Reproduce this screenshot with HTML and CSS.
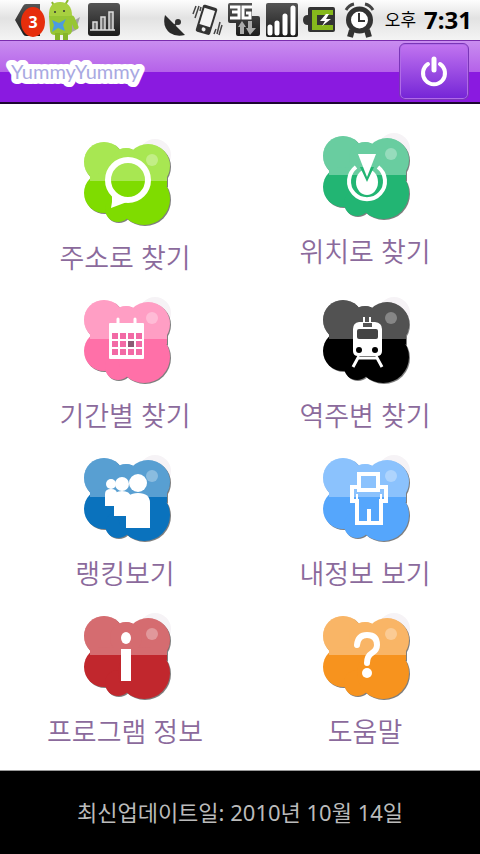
FILE: index.html
```html
<!DOCTYPE html>
<html lang="ko">
  <head>
    <meta charset="UTF-8" />
    <meta name="viewport" content="width=device-width, initial-scale=1.0" />
    <title>YummyYummy</title>
    <link rel="stylesheet" href="styles.css">
  </head>
  <body>
    <!-- shared shapes -->
    <svg class="defs" width="0" height="0" aria-hidden="true">
      <defs>
        <linearGradient id="dark" x1="0" y1="0" x2="0" y2="1">
          <stop offset="0" stop-color="#555" />
          <stop offset="1" stop-color="#1c1c1c" />
        </linearGradient>
        <g id="blob">
          <circle cx="21" cy="22" r="20" />
          <circle cx="65" cy="26" r="22" />
          <circle cx="43" cy="24" r="16" />
          <circle cx="21" cy="53" r="20" />
          <circle cx="35" cy="69" r="13" />
          <circle cx="61" cy="59" r="26" />
          <path d="M7 34H84V46H7z" />
        </g>
        <clipPath id="blobClip">
          <circle cx="21" cy="22" r="20" />
          <circle cx="65" cy="26" r="22" />
          <circle cx="43" cy="24" r="16" />
          <path d="M7 34H84V46H7z" />
        </clipPath>
        <g id="cloud">
          <circle cx="72" cy="15" r="16" fill="#f6f3f6" />
          <use href="#blob" x="1" y="1" fill="#000" opacity="0.5" />
          <use href="#blob" />
          <g clip-path="url(#blobClip)">
            <path d="M0 0H90V41H0z" fill="#fff" opacity="0.32" />
          </g>
          <circle cx="69" cy="20" r="6" fill="#fff" opacity="0.3" />
        </g>
      </defs>
    </svg>

    <div class="status">
      <div class="status-left">
        <svg width="32" height="40" viewBox="0 0 32 40">
          <path d="M1 20L9 6Q10 4 12 4H26V36H12Q10 36 9 34z" fill="url(#dark)" />
          <ellipse cx="19" cy="22" rx="12" ry="15" fill="#e62e0c" />
          <text x="19" y="28" class="badge">3</text>
        </svg>
        <svg width="36" height="40" viewBox="0 0 36 40">
          <path d="M26 22L34 17 30 30 22 34z" fill="#777" opacity="0.6" />
          <path d="M6 2L8 6M22 0L19 5" stroke="#8ab92d" stroke-width="2" />
          <path d="M3 17Q2 2 14 2T26 16z" fill="#a8d040" />
          <path d="M3 16H26V30Q26 35 21 35H9Q4 35 4 30z" fill="#97c634" />
          <path d="M9 33H14V40H9zM17 33H22V40H17z" fill="#86b52a" />
          <path d="M26 18L30 27" stroke="#97c634" stroke-width="5" stroke-linecap="round" />
          <circle cx="9" cy="12" r="1" fill="#333" /><circle cx="18" cy="11" r="1" fill="#333" />
          <path d="M6 20L13 23 20 19 17 25 19 31 12 28 6 32 8 25z" fill="#4b9be0" />
        </svg>
        <svg width="40" height="40" viewBox="0 0 40 40">
          <rect x="6" y="3" width="32" height="33" rx="3" fill="url(#dark)" />
          <path d="M8 30H33M11 30V22H15V30M19 30V17H23V30M27 30V12H31V30" fill="#777" stroke="#ddd" stroke-width="1.5" />
        </svg>
      </div>
      <div class="status-right">
        <svg width="24" height="40" viewBox="0 0 24 40">
          <path d="M2 15Q-1 27 7 33Q13 37 22 35z" fill="#2a2a2a" />
          <path d="M11 26L15 22" stroke="#333" stroke-width="2" />
          <circle cx="15" cy="22" r="3" fill="#333" />
        </svg>
        <svg width="32" height="40" viewBox="0 0 32 40">
          <g transform="rotate(17 16 20)">
            <rect x="8" y="6" width="15" height="28" rx="2" fill="#333" />
            <rect x="10" y="9" width="11" height="17" fill="#f4f4f4" />
            <circle cx="15.500" cy="30" r="2" fill="#eee" />
          </g>
          <path d="M5 6L2 14M8 6L4 18M10 7L9 11M29 22L26 34M31 25L28 35M25 29L23 34" stroke="#444" stroke-width="1.500" />
        </svg>
        <svg width="34" height="40" viewBox="0 0 34 40">
          <path d="M3 3H25V16H31Q33 16 33 18V34Q33 36 31 36H11Q9 36 9 34V23H3Q1 23 1 21V5Q1 3 3 3z" fill="url(#dark)" />
          <path d="M3 7H12V18H3M5 12H12" fill="none" stroke="#fff" stroke-width="3" />
          <path d="M25 7H16V18H23V13H19" fill="none" stroke="#fff" stroke-width="3" />
          <path d="M11 27L15 21 19 27H17V34H13V27zM21 21H25V28H29L23 35 19 28H21z" fill="#aaa" />
        </svg>
        <svg width="34" height="40" viewBox="0 0 34 40">
          <rect x="1" y="3" width="32" height="34" rx="2" fill="url(#dark)" />
          <path d="M5 33V27M12 33V23M20 33V16M28 33V8" stroke="#fff" stroke-width="5" stroke-linecap="round" />
        </svg>
        <svg width="34" height="40" viewBox="0 0 34 40">
          <path d="M7 7H30Q32 7 32 9V30Q32 32 30 32H7Q5 32 5 30V25Q0 25 0 20T5 15V9Q5 7 7 7z" fill="#333" />
          <path d="M9 10H30V15H14V25H30V30H9z" fill="#86b81c" />
          <path d="M23 14L17 21H22L19 26 28 19H23L26 14z" fill="#fff" />
        </svg>
        <svg width="36" height="40" viewBox="0 0 36 40">
          <path d="M5 10Q8 5 13 4M24 4Q29 5 32 10" fill="none" stroke="#444" stroke-width="3" />
          <path d="M11 30L9 37M26 30L28 37" stroke="#333" stroke-width="6" />
          <circle cx="18.500" cy="20" r="11" fill="#fff" stroke="#333" stroke-width="5" />
          <path d="M18 13V21H24" fill="none" stroke="#333" stroke-width="2" />
        </svg>
        <span class="ampm">오후</span>
        <span class="clock">7:31</span>
      </div>
    </div>

    <header class="header">
      <h1 class="logo">
        <svg width="150" height="56" viewBox="0 0 150 56">
          <text x="6" y="35" class="logo-text">YummyYummy</text>
        </svg>
      </h1>
      <button class="power" type="button" aria-label="종료">
        <svg width="32" height="34" viewBox="0 0 32 34">
          <path d="M10 9A11 11 0 1 0 22 9" fill="none" stroke="#fff" stroke-width="4" stroke-linecap="round" />
          <path d="M16 4V15" stroke="#fff" stroke-width="5" stroke-linecap="round" />
        </svg>
      </button>
    </header>

    <main class="menu">
      <a class="item low" href="#address">
        <svg class="icon green" viewBox="-3 0 90 90">
          <use href="#cloud" />
          <circle cx="45" cy="40" r="20" fill="none" stroke="#fff" stroke-width="6" />
          <path d="M26 48Q31 54 28 68L44 62z" fill="#fff" />
        </svg>
        <span class="label">주소로 찾기</span>
      </a>
      <a class="item" href="#location">
        <svg class="icon teal" viewBox="-2 0 90 90">
          <use href="#cloud" />
          <path d="M34 33A18 18 0 1 0 56 33" fill="none" stroke="#fff" stroke-width="4" />
          <ellipse cx="45" cy="48" rx="11" ry="13" fill="#fff" />
          <path d="M38 33H52L45 48z" />
          <path d="M36 20H54L45 43z" fill="#fff" />
        </svg>
        <span class="label">위치로 찾기</span>
      </a>
      <a class="item" href="#period">
        <svg class="icon pink" viewBox="-3 0 90 90">
          <use href="#cloud" />
          <rect x="26" y="25" width="35" height="36" rx="1" fill="#fff" />
          <path d="M35 21V27M52 21V27" stroke="#fff" stroke-width="3" stroke-linecap="round" />
          <path d="M29 38H59M29 46H59M29 54H59" stroke="#f26aa5" stroke-width="6" stroke-dasharray="6 2" />
          <path d="M45 43H51V49H45z" fill="#8c5a73" />
        </svg>
        <span class="label">기간별 찾기</span>
      </a>
      <a class="item" href="#station">
        <svg class="icon black" viewBox="-2 0 90 90">
          <use href="#cloud" />
          <path d="M42 19V25M48 19V25" stroke="#fff" stroke-width="2" />
          <path d="M37 24H53Q60 25 60 31V53Q60 58 55 58H36Q31 58 31 53V31Q31 25 37 24z" fill="#fff" />
          <path d="M41 25H50V29H41z" fill="#555" />
          <path d="M37 31H54Q56 31 56 33V39Q56 41 54 41H37Q35 41 35 39V33Q35 31 37 31z" fill="#444" />
          <circle cx="37" cy="52" r="3" /><circle cx="53" cy="52" r="3" />
          <path d="M37 58L31 69M54 58L60 69M36 60H55" stroke="#fff" stroke-width="3" />
        </svg>
        <span class="label">역주변 찾기</span>
      </a>
      <a class="item" href="#ranking">
        <svg class="icon blue" viewBox="-3 0 90 90">
          <use href="#cloud" />
          <g fill="#fff">
            <circle cx="28" cy="28" r="5" />
            <path d="M22 50V38Q22 33 28 33T34 38V50z" />
            <circle cx="39" cy="28" r="7" />
            <path d="M31 60V41Q31 35 39 35T48 41V60z" />
            <circle cx="55" cy="27" r="9" />
            <path d="M43 72V47Q43 37 55 37T67 47V72z" />
          </g>
        </svg>
        <span class="label">랭킹보기</span>
      </a>
      <a class="item" href="#myinfo">
        <svg class="icon sky" viewBox="-2 0 90 90">
          <use href="#cloud" />
          <path d="M37 31H30V45H35V67H59V45H64V31H56" fill="none" stroke="#fff" stroke-width="4" />
          <path d="M37 18H56V34H37z" fill="none" stroke="#fff" stroke-width="4" />
          <path d="M47 53V67" stroke="#fff" stroke-width="4" />
          <path d="M35 38V46M59 38V46" stroke="#fff" stroke-width="2" />
        </svg>
        <span class="label">내정보 보기</span>
      </a>
      <a class="item" href="#about">
        <svg class="icon red" viewBox="-3 0 90 90">
          <use href="#cloud" />
          <ellipse cx="43" cy="24" rx="5" ry="6" fill="#fff" />
          <path d="M38 35H48V67H38z" fill="#fff" />
        </svg>
        <span class="label">프로그램 정보</span>
      </a>
      <a class="item" href="#help">
        <svg class="icon orange" viewBox="-2 0 90 90">
          <use href="#cloud" />
          <path d="M35 31Q36 21 45 21Q55 21 55 31Q55 36 50 39Q45 42 45 49" fill="none" stroke="#fff" stroke-width="6" stroke-linecap="round" />
          <circle cx="45" cy="59" r="5" fill="#fff" />
        </svg>
        <span class="label">도움말</span>
      </a>
    </main>

    <footer class="footer">최신업데이트일: 2010년 10월 14일</footer>
  </body>
</html>
```
FILE: styles.css
```css
* {
  box-sizing: border-box;
}

body {
  margin: 0;
  min-height: 100vh;
  display: flex;
  flex-direction: column;
  background-color: #fff;
  font-family: "Noto Sans", "Noto Sans CJK KR", sans-serif;
}

svg {
  display: block;
}

.defs {
  position: absolute;
}

/* status bar */
.status {
  display: flex;
  justify-content: space-between;
  height: 40px;
  padding: 0 8px 0 14px;
  background: linear-gradient(#fdfdfd, #e2e2e2 45%, #f4f4f4);
}

.status-left,
.status-right {
  display: flex;
  align-items: center;
}

.status-right {
  gap: 4px;
}

.badge {
  fill: #fff;
  font-size: 16px;
  font-weight: bold;
  text-anchor: middle;
}

.ampm {
  margin-left: 4px;
  font-size: 17px;
  line-height: 40px;
}

.clock {
  margin-left: 4px;
  font-size: 24px;
  font-weight: bold;
  line-height: 40px;
}

/* title bar */
.header {
  display: flex;
  justify-content: space-between;
  align-items: center;
  height: 64px;
  padding: 0 11px 0 5px;
  border-top: 1px solid #7a2cae;
  border-bottom: 2px solid #1d0630;
  background: linear-gradient(#c98df0, #b562e9 50%, #8a1ae0 50%, #8a1ae0);
}

.logo {
  margin: 0;
}

.logo-text {
  fill: #a9a9e2;
  stroke: #fff;
  stroke-width: 10px;
  stroke-linejoin: round;
  paint-order: stroke;
  font-family: Lato, sans-serif;
  font-size: 20px;
  font-weight: normal;
}

.power {
  display: flex;
  justify-content: center;
  align-items: center;
  width: 70px;
  height: 57px;
  padding: 0;
  border: 1px solid #7a35b8;
  border-radius: 6px;
  background: linear-gradient(#c275f0, #7424d6);
  box-shadow: inset 0 0 0 1px #b06be8;
  cursor: pointer;
}

/* menu */
.menu {
  flex: 1;
  display: grid;
  grid-template-columns: 1fr 1fr;
  grid-template-rows: 144px;
  align-content: start;
  row-gap: 20px;
  padding: 30px 0 18px;
}

.item {
  display: flex;
  flex-direction: column;
  align-items: center;
  padding-left: 10px;
  color: #8b6a9c;
  text-decoration: none;
}

.low {
  align-self: end;
}

.icon {
  width: 90px;
  height: 90px;
  overflow: visible;
}

.label {
  margin-top: 8px;
  font-size: 27px;
  font-weight: 350;
  line-height: 40px;
}

.green {
  fill: #7fdc00;
}

.teal {
  fill: #22b573;
}

.pink {
  fill: #ff70a8;
}

.black {
  fill: #000;
}

.blue {
  fill: #0a72bd;
}

.sky {
  fill: #55a6fc;
}

.red {
  fill: #c1272d;
}

.orange {
  fill: #f7931e;
}

.footer {
  padding: 22px 0;
  border-top: 1px solid #999;
  background-color: #000;
  color: #bbb;
  font-size: 22px;
  font-weight: 400;
  line-height: 39px;
  text-align: center;
}
```
